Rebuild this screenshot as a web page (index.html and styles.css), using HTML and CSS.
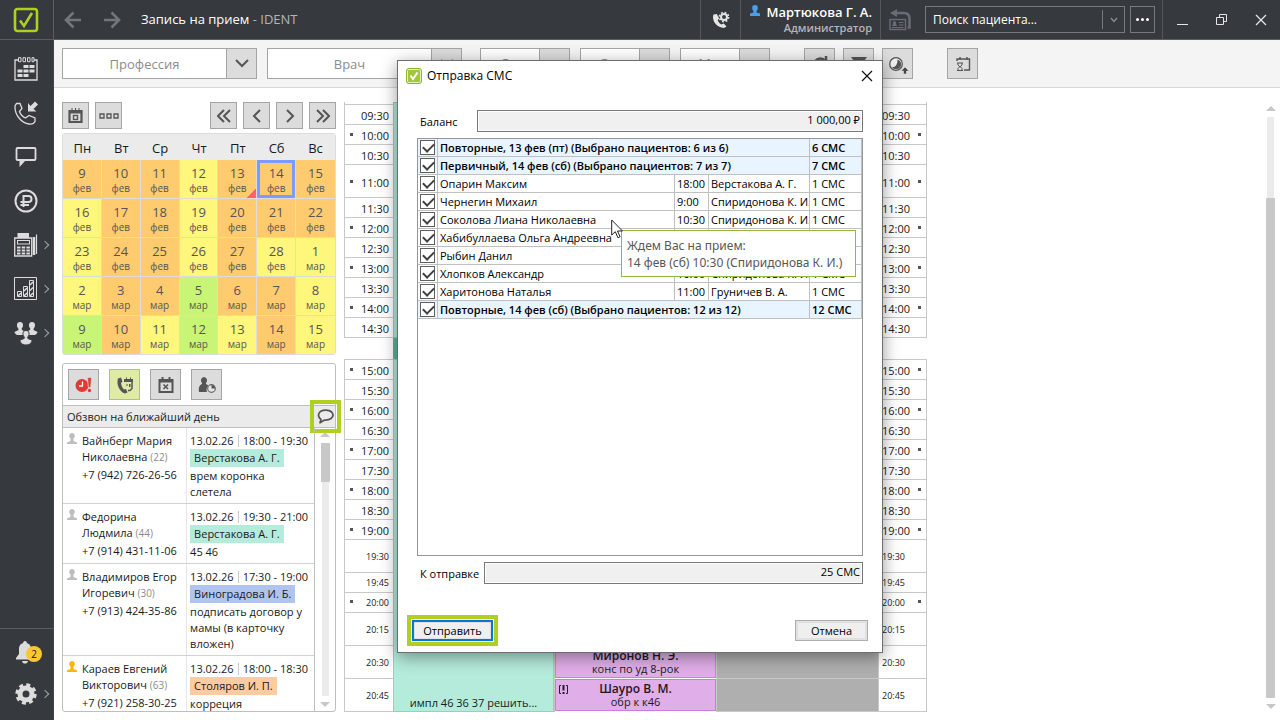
FILE: index.html
```html
<!DOCTYPE html>
<html lang="ru">
<head>
    <meta charset="UTF-8">
    <meta name="viewport" content="width=device-width, initial-scale=1.0">
    <title>Запись на прием - IDENT</title>
    <link rel="stylesheet" href="styles.css">
</head>
<body>
    <header class="topbar">
        <div class="logo">
            <svg width="26" height="26" viewBox="0 0 26 26" fill="none" stroke="#afd01f">
                <rect x="2" y="2" width="22" height="22" rx="2.5" stroke-width="2.6"/>
                <path d="M7 13.5l4 5.5 8-13" stroke-width="2.6"/>
            </svg>
        </div>
        <nav class="history">
            <button type="button" aria-label="Назад"><svg width="18" height="18" viewBox="0 0 18 18" fill="none" stroke="#73767c" stroke-width="2.6"><path d="M17 9H2M9.500 1.500L2 9l7.500 7.500"/></svg></button>
            <button type="button" aria-label="Вперед"><svg width="18" height="18" viewBox="0 0 18 18" fill="none" stroke="#73767c" stroke-width="2.6"><path d="M1 9h15M8.500 1.500L16 9l-7.500 7.500"/></svg></button>
        </nav>
        <h1 class="title">Запись на прием <span>- IDENT</span></h1>
        <button type="button" class="phone-settings" aria-label="Телефония">
            <svg width="18" height="18" viewBox="0 0 18 18">
                <path d="M1.500 3.500C-.5 9 4 16.500 12 17l2.500-1.500-2.800-3-2.200 1c-2-.8-3.500-2.800-3.800-4.500l1.500-1.500L4.800 3z" fill="#e6e6e6"/>
                <circle cx="12" cy="6" r="3" fill="none" stroke="#e6e6e6" stroke-width="2"/>
                <circle cx="12" cy="6" r="4.600" fill="none" stroke="#e6e6e6" stroke-width="1.600" stroke-dasharray="1.800 1.810"/>
            </svg>
        </button>
        <div class="user">
            <div class="user-name">
                <svg width="12" height="13" viewBox="0 0 12 13"><path d="M6 1a2.800 2.800 0 0 1 2.800 3c0 1.600-.8 2.500-1.300 3.200V8.500L11 9.500V12H1V9.500L4.500 8.500V7.200C4 6.500 3.200 5.600 3.200 4A2.800 2.800 0 0 1 6 1z" fill="#4a9fe8"/></svg>
                Мартюкова Г. А.
            </div>
            <div class="user-role">Администратор</div>
        </div>
        <div class="search">
            <button type="button" class="card-back" aria-label="Последний пациент">
                <svg width="22" height="22" viewBox="0 0 22 22" fill="none" stroke="#696c75">
                    <path d="M6 4h9c4 0 5.500 3 5.500 6v8.500h-2" stroke-width="2.500"/>
                    <path d="M8 0v8L1 4z" fill="#696c75" stroke="none"/>
                    <rect x="1" y="10.500" width="15.500" height="10" stroke-width="1.400"/>
                    <path d="M10 13.500h4.500M10 16h4.500M3 18.500h11.500" stroke-width="1.200"/>
                    <path d="M4 12.500h3v2.500l1 2H3l1-2z" fill="#696c75" stroke="none"/>
                </svg>
            </button>
            <label class="search-box">
                <input type="text" aria-label="Поиск пациента" placeholder="Поиск пациента...">
                <span class="search-arrow"><svg width="8" height="6" viewBox="0 0 8 6" fill="none" stroke="#8a8d92" stroke-width="1.300"><path d="M1 1l3 3.500L7 1"/></svg></span>
            </label>
            <button type="button" class="more" aria-label="Еще"><i></i><i></i><i></i></button>
        </div>
        <div class="window-buttons">
            <button type="button" aria-label="Свернуть"><svg width="12" height="12" viewBox="0 0 12 12" stroke="#e6e6e6"><path d="M0 10.500h11"/></svg></button>
            <button type="button" aria-label="Восстановить"><svg width="12" height="12" viewBox="0 0 12 12" fill="none" stroke="#e6e6e6"><path d="M.5 3.500h7v7h-7zM3.500 3.500v-3h7v7h-3"/></svg></button>
            <button type="button" aria-label="Закрыть"><svg width="12" height="12" viewBox="0 0 12 12" stroke="#e6e6e6" stroke-width="1.300"><path d="M1 1l10 10M11 1L1 11"/></svg></button>
        </div>
    </header>

    <div class="workspace">
        <aside class="sidebar">
            <a href="#" aria-label="Расписание">
                <svg width="24" height="24" viewBox="0 0 24 24" fill="none" stroke="#dcdcdc">
                    <path d="M4 3H1v20h22V3h-3" stroke-width="1.300"/>
                    <path d="M4.500.7h2.500v4H4.500zM9 .7h2.500v4H9zM13.500.7H16v4h-2.500zM18 .7h2v4h-2z"/>
                    <path d="M9.500 9.500h11M3.500 14h17M3.500 18.500h11" stroke-width="3" stroke-dasharray="5 1"/>
                </svg>
            </a>
            <a href="#" aria-label="Звонки">
                <svg width="24" height="24" viewBox="0 0 24 24" fill="none" stroke="#dcdcdc">
                    <path d="M2.500 2.500h3.500l2 5-2.500 3c1 3 3.500 5.500 6 6.500l3.500-2.500 6 2.500v3.500c-1 2-3 3-6 2.500C7.500 22 .5 14 1 5z" stroke-width="1.300"/>
                    <path d="M14 2v8.500h8.500L19.500 8 24 3.500 21 .5 16.500 5z" fill="#dcdcdc" stroke="none"/>
                </svg>
            </a>
            <a href="#" aria-label="Сообщения">
                <svg width="24" height="24" viewBox="0 0 24 24">
                    <rect x="2.500" y="3" width="19" height="12" rx="1" fill="none" stroke="#dcdcdc" stroke-width="1.800"/>
                    <path d="M5.500 15h6.500l-6.500 7z" fill="#dcdcdc"/>
                </svg>
            </a>
            <a href="#" aria-label="Финансы">
                <svg width="24" height="24" viewBox="0 0 24 24" fill="none" stroke="#dcdcdc" stroke-width="2">
                    <circle cx="12" cy="12" r="10.500"/>
                    <path d="M9.500 18V7h5a3 3 0 0 1 0 6h-8M6.500 16h8.500"/>
                </svg>
            </a>
            <a href="#" class="has-menu" aria-label="Касса">
                <svg width="24" height="24" viewBox="0 0 24 24" fill="none" stroke="#dcdcdc">
                    <path d="M3.500 0h11.500v5H3.500z" fill="#dcdcdc" stroke="none"/>
                    <path d="M.7 5h17v18H.7z" stroke-width="1.300"/>
                    <rect x="3.500" y="7.500" width="12" height="3.500"/>
                    <path d="M3 14.500h13M3 17.500h13M3 20.500h13" stroke-width="2" stroke-dasharray="3.500 1.200"/>
                    <path d="M20 4v18" stroke-width="2.500"/>
                    <path d="M22.500 1.500v19.500" stroke-width="1.200"/>
                </svg>
            </a>
            <a href="#" class="has-menu" aria-label="Отчеты">
                <svg width="24" height="24" viewBox="0 0 24 24" fill="none" stroke="#dcdcdc">
                    <path d="M.5.500h22v22H.5zM3.500 14.500h4v5h-4zM9.500 9.500h4v10h-4zM15.500 3.500h4v16h-4z"/>
                    <path d="M4 19l3-3M10 14l3-3M10 19l3-3M16 8l3-3M16 13.500l3-3M16 19l3-3" stroke-width="1.500"/>
                </svg>
            </a>
            <a href="#" class="has-menu" aria-label="Пациенты">
                <svg width="24" height="24" viewBox="0 0 24 24" fill="#dcdcdc">
                    <path d="M6 1c4 0 3.500 5 1.700 6.500L8 9l3 1.500v1L9 14H3C1.500 13 .5 12 .5 11L4.500 9l-.2-1.500C2.500 6 2 1 6 1z"/>
                    <path d="M18 1c-4 0-3.500 5-1.700 6.500L16 9l-3 1.500v1l2 2.500h6c1.500-1 2.500-2 2.500-3L19.500 9l.2-1.500C21.500 6 22 1 18 1z"/>
                    <path d="M12 9.500c4 0 3.500 5 1.700 6.500l.2 1.500L18 19c0 2-1.500 5-6 5s-6-3-6-5l4.100-1.500.2-1.500C8.500 14.500 8 9.500 12 9.500z" stroke="#36393e"/>
                </svg>
            </a>
            <div class="sidebar-bottom">
                <a href="#" aria-label="Уведомления">
                    <svg width="20" height="24" viewBox="0 0 20 24" fill="#dcdcdc">
                        <path d="M9 1c1.500 0 1.800 1 1.800 2C14 4 15 6 15 10v4l3 4v1.500H0V18l3-4v-4c0-4 1-6 4.200-7 0-1 .3-2 1.800-2zM6 21h6c-.5 2-1.500 2.500-3 2.500S6.500 23 6 21z"/>
                    </svg>
                    <span class="badge">2</span>
                </a>
                <a href="#" class="has-menu" aria-label="Настройки">
                    <svg width="22" height="22" viewBox="0 0 22 22" fill="none" stroke="#dcdcdc">
                        <circle cx="11" cy="11" r="6" stroke-width="5"/>
                        <circle cx="11" cy="11" r="9.200" stroke-width="3" stroke-dasharray="4 3.225"/>
                    </svg>
                </a>
            </div>
        </aside>

        <main class="main">
            <div class="filters">
                <label class="combo">
                    <select aria-label="Профессия"><option>Профессия</option></select>
                    <span class="combo-arrow"><svg width="14" height="9" viewBox="0 0 14 9"><path d="M1 1l6 6 6-6"/></svg></span>
                </label>
                <label class="combo">
                    <select aria-label="Врач"><option>Врач</option></select>
                    <span class="combo-arrow"><svg width="14" height="9" viewBox="0 0 14 9"><path d="M1 1l6 6 6-6"/></svg></span>
                </label>
                <div class="small-combos">
                    <label class="combo small">
                        <select aria-label="Статус"><option>С...</option></select>
                        <span class="combo-arrow"></span>
                    </label>
                    <label class="combo small">
                        <select aria-label="Запись"><option>З...</option></select>
                        <span class="combo-arrow"></span>
                    </label>
                    <label class="combo small">
                        <select aria-label="Место"><option>М...</option></select>
                        <span class="combo-arrow"></span>
                    </label>
                </div>
                <div class="filter-buttons">
                    <button type="button" aria-label="Обновить"><svg width="20" height="20" viewBox="0 0 20 20" fill="none" stroke="#555" stroke-width="2.500"><path d="M15 7a6 6 0 1 0 1 5M16 2v6h-6"/></svg></button>
                    <button type="button" aria-label="Фильтр"><svg width="20" height="20" viewBox="0 0 20 20" fill="#555"><path d="M2 3h16l-6 8v7l-4-3v-4z"/></svg></button>
                    <button type="button" aria-label="Время">
                        <svg width="22" height="22" viewBox="0 0 22 22">
                            <circle cx="9" cy="11" r="6.300" fill="#eee" stroke="#555" stroke-width="1.300"/>
                            <path d="M10.500 6.500a5 5 0 1 1-5.500 7.500c4 .5 5.500-3 5.500-7.500z" fill="#555"/>
                            <path d="M18 14l4 4h-2.500v3h-3v-3H14z" fill="#444" stroke="#ddd" stroke-width=".6"/>
                        </svg>
                    </button>
                </div>
                <button type="button" class="waiting" aria-label="Лист ожидания">
                    <svg width="16" height="16" viewBox="0 0 16 16" fill="none" stroke="#555">
                        <path d="M2 5V3h12.500v11H9M5 1v3M12 1v3" stroke-width="1.400"/>
                        <path d="M2 7h6M2 14.500h6M3 7v2l2 2 2-2V7M3 14.500v-2l2-2 2 2v2"/>
                    </svg>
                </button>
            </div>

            <div class="content">
                <div class="left">
                    <div class="date-nav">
                        <button type="button" aria-label="Сегодня"><svg width="15" height="16" viewBox="0 0 15 16" fill="none" stroke="#555"><path d="M1.500 3h12v11h-12z" stroke-width="2.200"/><path d="M1 4.500h13" stroke-width="2"/><path d="M4 0v3M7.500 0v3M11 0v3"/><rect x="5.500" y="7.500" width="4" height="4" stroke-width="1.400"/></svg></button>
                        <button type="button" aria-label="Период"><svg width="20" height="6" viewBox="0 0 20 6" fill="none" stroke="#555" stroke-width="1.300"><path d="M1 1h4v4H1zM8 1h4v4H8zM15 1h4v4h-4z"/></svg></button>
                        <button type="button" class="first-nav" aria-label="Месяц назад"><svg width="14" height="14" viewBox="0 0 14 14"><path d="M7 1L1 7l6 6M13 1L7 7l6 6"/></svg></button>
                        <button type="button" aria-label="Неделя назад"><svg width="14" height="14" viewBox="0 0 14 14"><path d="M10 1L4 7l6 6"/></svg></button>
                        <button type="button" aria-label="Неделя вперед"><svg width="14" height="14" viewBox="0 0 14 14"><path d="M4 1l6 6-6 6"/></svg></button>
                        <button type="button" aria-label="Месяц вперед"><svg width="14" height="14" viewBox="0 0 14 14"><path d="M1 1l6 6-6 6M7 1l6 6-6 6"/></svg></button>
                    </div>

                    <table class="calendar">
                        <thead>
                            <tr><th>Пн</th><th>Вт</th><th>Ср</th><th>Чт</th><th>Пт</th><th>Сб</th><th>Вс</th></tr>
                        </thead>
                        <tbody>
                            <tr>
                                <td class="busy">9<small>фев</small></td><td class="busy">10<small>фев</small></td><td class="busy">11<small>фев</small></td><td>12<small>фев</small></td><td class="busy today">13<small>фев</small></td><td class="busy selected">14<small>фев</small></td><td class="busy">15<small>фев</small></td>
                            </tr>
                            <tr>
                                <td>16<small>фев</small></td><td class="busy">17<small>фев</small></td><td class="busy">18<small>фев</small></td><td>19<small>фев</small></td><td class="busy">20<small>фев</small></td><td class="busy">21<small>фев</small></td><td class="busy">22<small>фев</small></td>
                            </tr>
                            <tr>
                                <td>23<small>фев</small></td><td class="busy">24<small>фев</small></td><td class="busy">25<small>фев</small></td><td>26<small>фев</small></td><td class="busy">27<small>фев</small></td><td>28<small>фев</small></td><td>1<small>мар</small></td>
                            </tr>
                            <tr>
                                <td>2<small>мар</small></td><td class="busy">3<small>мар</small></td><td class="busy">4<small>мар</small></td><td class="free">5<small>мар</small></td><td class="busy">6<small>мар</small></td><td class="busy">7<small>мар</small></td><td>8<small>мар</small></td>
                            </tr>
                            <tr>
                                <td class="free">9<small>мар</small></td><td class="busy">10<small>мар</small></td><td>11<small>мар</small></td><td class="free">12<small>мар</small></td><td>13<small>мар</small></td><td class="busy">14<small>мар</small></td><td>15<small>мар</small></td>
                            </tr>
                        </tbody>
                    </table>

                    <section class="tasks">
                        <div class="task-tabs">
                            <button type="button" aria-label="Просрочено"><svg width="18" height="18" viewBox="0 0 18 18"><circle cx="7" cy="9.500" r="6.500" fill="#e03a36"/><path d="M7.500 5.500v4.500H4" fill="none" stroke="#fff" stroke-width="1.300"/><path d="M12.500 1.500h4l-.8 10h-2.400z" fill="#e03a36" stroke="#dcdcdc" stroke-width=".7"/><circle cx="14.500" cy="14.500" r="1.700" fill="#e03a36"/></svg></button>
                            <button type="button" class="active" aria-label="Обзвон"><svg width="18" height="18" viewBox="0 0 18 18" fill="#555"><path d="M2 2.500l3-1 1.500 4L5 7c.3 3 1.500 5 3 6.500l2-.5 1.500 3.500L9 17.500C3.500 16 0 8 2 2.500z"/><path d="M8.500 4.500h7.500v8l-2 2h-2" fill="none" stroke="#555" stroke-width="1.500"/><path d="M8 3h9v3H8zM10 1.500h1v2h-1zM14 1.500h1v2h-1zM10 8.500h2v1h-2zM13 8h1.500v3H13z"/></svg></button>
                            <button type="button" aria-label="Отмены"><svg width="18" height="18" viewBox="0 0 18 18" fill="none" stroke="#555"><path d="M2.500 4h13v12h-13z" stroke-width="2"/><path d="M2 5h14" stroke-width="3"/><path d="M5.500 1v3M12.500 1v3" stroke-width="2"/><path d="M6.500 8.500l4.500 4.500M11 8.500L6.500 13" stroke-width="1.600"/></svg></button>
                            <button type="button" aria-label="Напоминания"><svg width="18" height="18" viewBox="0 0 18 18" fill="#555"><path d="M6 1a3.500 3.500 0 0 1 2 6v1l2.500 1.500A6 6 0 0 0 9 16H1c-.5-4 0-6.500 3-8V7A3.500 3.500 0 0 1 6 1z"/><circle cx="13.500" cy="12.500" r="3.800" fill="#e6e6e6" stroke="#666" stroke-width="1.200"/><path d="M13.500 12.500V9a3.500 3.500 0 0 1 3.500 3.500z"/></svg></button>
                        </div>
                        <div class="tasks-head">
                            <h2>Обзвон на ближайший день</h2>
                            <button type="button" aria-label="Отправить СМС"><svg width="17" height="15" viewBox="0 0 17 15" fill="none" stroke="#555" stroke-width="1.700"><path d="M4 10.500C-.5 7 1.500 1.200 8.500 1.200s9.500 5 5.500 8.300c-2 1.500-4 1.700-6.500 1.500L3 13.800z" stroke-linejoin="round"/></svg></button>
                        </div>
                        <div class="tasks-body">
                            <ul class="patients">
                                <li>
                                    <div class="person">
                                        <svg width="12" height="12" viewBox="0 0 12 12"><path d="M6 0a3 3 0 0 1 1.500 5.500V8L11 9.500V11H1V9.500L4.500 8V5.500A3 3 0 0 1 6 0z"/></svg>
                                        <div>Вайнберг Мария Николаевна <span>(22)</span><p>+7 (942) 726-26-56</p></div>
                                    </div>
                                    <div class="visit">
                                        <p class="time">13.02.26<i></i>18:00 - 19:30</p>
                                        <mark>Верстакова А. Г.</mark>
                                        <p>врем коронка слетела</p>
                                    </div>
                                </li>
                                <li>
                                    <div class="person">
                                        <svg width="12" height="12" viewBox="0 0 12 12"><path d="M6 0a3 3 0 0 1 1.500 5.500V8L11 9.500V11H1V9.500L4.500 8V5.500A3 3 0 0 1 6 0z"/></svg>
                                        <div>Федорина Людмила <span>(44)</span><p>+7 (914) 431-11-06</p></div>
                                    </div>
                                    <div class="visit">
                                        <p class="time">13.02.26<i></i>19:30 - 21:00</p>
                                        <mark>Верстакова А. Г.</mark>
                                        <p>45 46</p>
                                    </div>
                                </li>
                                <li>
                                    <div class="person">
                                        <svg width="12" height="12" viewBox="0 0 12 12"><path d="M6 0a3 3 0 0 1 1.500 5.500V8L11 9.500V11H1V9.500L4.500 8V5.500A3 3 0 0 1 6 0z"/></svg>
                                        <div>Владимиров Егор Игоревич <span>(30)</span><p>+7 (913) 424-35-86</p></div>
                                    </div>
                                    <div class="visit">
                                        <p class="time">13.02.26<i></i>17:30 - 19:00</p>
                                        <mark class="blue">Виноградова И. Б.</mark>
                                        <p>подписать договор у мамы (в карточку вложен)</p>
                                    </div>
                                </li>
                                <li>
                                    <div class="person vip">
                                        <svg width="12" height="12" viewBox="0 0 12 12"><path d="M6 0a3 3 0 0 1 1.500 5.500V8L11 9.500V11H1V9.500L4.500 8V5.500A3 3 0 0 1 6 0z"/></svg>
                                        <div>Караев Евгений Викторович <span>(63)</span><p>+7 (921) 258-30-25</p></div>
                                    </div>
                                    <div class="visit">
                                        <p class="time">13.02.26<i></i>18:00 - 18:30</p>
                                        <mark class="orange">Столяров И. П.</mark>
                                        <p>корреция</p>
                                    </div>
                                </li>
                            </ul>
                            <div class="scroll">
                                <span class="up"></span>
                                <div class="track"><div class="thumb"></div></div>
                                <span class="down"></span>
                            </div>
                        </div>
                    </section>
                </div>

                <div class="schedule">
                    <ol class="times">
                        <li class="cut"></li>
                        <li>09:30</li><li class="hour">10:00</li><li>10:30</li><li class="hour tall">11:00</li><li>11:30</li><li class="hour">12:00</li><li>12:30</li><li class="hour">13:00</li><li>13:30</li><li class="hour">14:00</li><li>14:30</li>
                        <li class="break"></li>
                        <li class="hour">15:00</li><li>15:30</li><li class="hour">16:00</li><li>16:30</li><li class="hour">17:00</li><li>17:30</li><li class="hour">18:00</li><li>18:30</li><li class="hour">19:00</li>
                        <li class="minor tall">19:30</li><li class="minor">19:45</li><li class="minor hour">20:00</li><li class="minor tall">20:15</li><li class="minor tall">20:30</li><li class="minor tall">20:45</li>
                    </ol>
                    <div class="doctor">
                        <div class="visit-card morning"></div>
                        <div class="lunch"></div>
                        <div class="visit-card evening">импл 46 36 37 решить...</div>
                    </div>
                    <div class="doctor">
                        <div class="off"></div>
                        <div class="visit-card purple"><b>Миронов Н. Э.</b>конс по уд 8-рок</div>
                        <div class="visit-card purple">
                            <svg width="9" height="9" viewBox="0 0 9 9" fill="none" stroke="#222"><path d="M2 .5H.5v8H2M7 .5h1.500v8H7"/><path d="M4.500 0v5.500M4.500 7v2" stroke-width="2"/></svg>
                            <b>Шауро В. М.</b>обр к к46
                        </div>
                    </div>
                    <div class="doctor">
                        <div class="off"></div>
                        <div class="off last"></div>
                    </div>
                    <ol class="times right">
                        <li class="cut"></li>
                        <li>09:30</li><li class="hour">10:00</li><li>10:30</li><li class="hour tall">11:00</li><li>11:30</li><li class="hour">12:00</li><li>12:30</li><li class="hour">13:00</li><li>13:30</li><li class="hour">14:00</li><li>14:30</li>
                        <li class="break"></li>
                        <li class="hour">15:00</li><li>15:30</li><li class="hour">16:00</li><li>16:30</li><li class="hour">17:00</li><li>17:30</li><li class="hour">18:00</li><li>18:30</li><li class="hour">19:00</li>
                        <li class="minor tall">19:30</li><li class="minor">19:45</li><li class="minor hour">20:00</li><li class="minor tall">20:15</li><li class="minor tall">20:30</li><li class="minor tall">20:45</li>
                    </ol>
                </div>

                <div class="scroll page-scroll">
                    <span class="up"></span>
                    <div class="track"><div class="thumb"></div></div>
                    <span class="down"></span>
                </div>
            </div>
        </main>
    </div>

    <!-- SMS dialog -->
    <div class="overlay">
        <section class="dialog" role="dialog" aria-labelledby="dialog-title">
            <div class="dialog-title">
                <svg width="16" height="16" viewBox="0 0 16 16"><rect x=".5" y=".5" width="15" height="15" rx="2.500" fill="#a3c63a" stroke="#8fb52e"/><rect x="1.500" y="1.500" width="13" height="13" rx="1.500" fill="none" stroke="#e4f0bd"/><path d="M4.500 7.500L7 11l4.500-6.500" fill="none" stroke="#fff" stroke-width="2"/></svg>
                <h2 id="dialog-title">Отправка СМС</h2>
                <button type="button" aria-label="Закрыть"><svg width="12" height="12" viewBox="0 0 12 12" stroke="#111" stroke-width="1.200"><path d="M1 1l10 10M11 1L1 11"/></svg></button>
            </div>
            <form class="dialog-body">
                <div class="field balance">
                    <label for="balance">Баланс</label>
                    <input id="balance" type="text" value="1 000,00 ₽" readonly>
                </div>
                <div class="sms-list">
                    <table>
                        <colgroup><col class="c-check"><col><col class="c-time"><col class="c-doctor"><col class="c-count"></colgroup>
                        <tbody>
                            <tr class="group"><td><input type="checkbox" aria-label="Повторные, 13 фев" checked></td><td colspan="3">Повторные, 13 фев (пт) (Выбрано пациентов: 6 из 6)</td><td>6 СМС</td></tr>
                            <tr class="group"><td><input type="checkbox" aria-label="Первичный, 14 фев" checked></td><td colspan="3">Первичный, 14 фев (сб) (Выбрано пациентов: 7 из 7)</td><td>7 СМС</td></tr>
                            <tr><td><input type="checkbox" aria-label="Опарин Максим" checked></td><td>Опарин Максим</td><td>18:00</td><td>Верстакова А. Г.</td><td>1 СМС</td></tr>
                            <tr><td><input type="checkbox" aria-label="Чернегин Михаил" checked></td><td>Чернегин Михаил</td><td>9:00</td><td>Спиридонова К. И.</td><td>1 СМС</td></tr>
                            <tr><td><input type="checkbox" aria-label="Соколова Лиана Николаевна" checked></td><td>Соколова Лиана Николаевна</td><td>10:30</td><td>Спиридонова К. И.</td><td>1 СМС</td></tr>
                            <tr><td><input type="checkbox" aria-label="Хабибуллаева Ольга Андреевна" checked></td><td>Хабибуллаева Ольга Андреевна</td><td></td><td></td><td></td></tr>
                            <tr><td><input type="checkbox" aria-label="Рыбин Данил" checked></td><td>Рыбин Данил</td><td></td><td></td><td></td></tr>
                            <tr><td><input type="checkbox" aria-label="Хлопков Александр" checked></td><td>Хлопков Александр</td><td>16:00</td><td>Спиридонова К. И.</td><td>1 СМС</td></tr>
                            <tr><td><input type="checkbox" aria-label="Харитонова Наталья" checked></td><td>Харитонова Наталья</td><td>11:00</td><td>Груничев В. А.</td><td>1 СМС</td></tr>
                            <tr class="group"><td><input type="checkbox" aria-label="Повторные, 14 фев" checked></td><td colspan="3">Повторные, 14 фев (сб) (Выбрано пациентов: 12 из 12)</td><td>12 СМС</td></tr>
                        </tbody>
                    </table>
                    <div class="tooltip" role="tooltip">Ждем Вас на прием:<br>14 фев (сб) 10:30 (Спиридонова К. И.)</div>
                    <svg class="cursor" width="13" height="20" viewBox="0 0 13 20"><path d="M.7 1v15l3.600-3.300 2.600 6 2.200-1-2.600-5.700h5z" fill="#fff" stroke="#222"/></svg>
                </div>
                <div class="field">
                    <label for="to-send">К отправке</label>
                    <input id="to-send" type="text" value="25 СМС" readonly>
                </div>
                <div class="dialog-buttons">
                    <button type="submit" class="send">Отправить</button>
                    <button type="button">Отмена</button>
                </div>
            </form>
        </section>
    </div>
</body>
</html>
```

FILE: styles.css
```css
* {
    box-sizing: border-box;
}
body {
    margin: 0;
    height: 100vh;
    display: flex;
    flex-direction: column;
    overflow: hidden;
    font-family: "Open Sans", "Noto Sans", sans-serif;
    font-size: 11px;
    color: #1a1a1a;
    background-color: #fff;
}
button, input, select {
    font-family: inherit;
    font-size: inherit;
    color: inherit;
}
button {
    padding: 0;
    display: flex;
    align-items: center;
    justify-content: center;
}
h1, h2, p, ul, ol {
    margin: 0;
    padding: 0;
    font-weight: normal;
    font-size: inherit;
    list-style: none;
}
svg {
    display: block;
    flex: none;
}

/* Top bar */
.topbar {
    flex: none;
    display: flex;
    height: 40px;
    background-color: #36393e;
    border-bottom: 1px solid #5c5e63;
    color: #fff;
}
.topbar button {
    background: none;
    border: none;
}
.logo {
    width: 54px;
    padding-right: 1px;
    display: flex;
    align-items: center;
    justify-content: center;
    border-right: 1px solid #5c5e63;
}
.history {
    display: flex;
    gap: 21px;
    padding: 0 20px 0 10px;
}
.title {
    flex: 1;
    line-height: 38px;
    font-size: 13px;
}
.title span {
    color: #b4b5b8;
}
.topbar .phone-settings {
    width: 41px;
    border: solid #55575c;
    border-width: 0 1px;
}
.user {
    width: 139px;
    padding: 4px 8px 0 0;
    text-align: right;
}
.user-name {
    display: flex;
    justify-content: flex-end;
    gap: 5px;
    font-size: 13px;
    line-height: 16px;
    font-weight: 600;
    white-space: nowrap;
}
.user-role {
    font-size: 11px;
    line-height: 16px;
    font-weight: 600;
    color: #b4b5b8;
}
.search {
    display: flex;
    align-items: center;
    gap: 5px;
    padding: 0 7px;
    border: solid #55575c;
    border-width: 0 1px;
}
.card-back {
    width: 24px;
    margin-right: 8px;
}
.search-box {
    display: flex;
    width: 200px;
    height: 27px;
    border: 1px solid #77797d;
}
.search-box input {
    flex: 1;
    min-width: 0;
    padding: 0 7px;
    border: none;
    background: none;
    font-size: 12px;
}
.search-box input::placeholder {
    color: #fff;
    opacity: 1;
}
.search-arrow {
    width: 22px;
    margin: 3px 0;
    display: flex;
    align-items: center;
    justify-content: center;
    border-left: 1px solid #77797d;
}
.topbar .more {
    width: 25px;
    height: 27px;
    gap: 2px;
    border: 1px solid #77797d;
}
.more i {
    width: 3px;
    height: 3px;
    border-radius: 50%;
    background-color: #fff;
}
.window-buttons {
    display: flex;
}
.window-buttons button {
    width: 39px;
}

/* Sidebar */
.workspace {
    flex: 1;
    min-height: 0;
    display: flex;
}
.sidebar {
    width: 54px;
    padding-top: 7px;
    display: flex;
    flex-direction: column;
    background-color: #36393e;
    border-right: 1px solid #44464b;
}
.sidebar a {
    position: relative;
    height: 44px;
    padding-right: 1px;
    display: flex;
    align-items: center;
    justify-content: center;
    text-decoration: none;
}
.has-menu::after {
    content: "";
    position: absolute;
    right: 5px;
    width: 5px;
    height: 5px;
    border: solid #a0a2a6;
    border-width: 1px 1px 0 0;
    transform: rotate(45deg);
}
.sidebar-bottom {
    margin-top: auto;
    padding: 2px 0 5px;
    border-top: 1px solid #5c5e63;
}
.sidebar-bottom a {
    height: 42px;
}
.badge {
    position: absolute;
    left: 26px;
    top: 15px;
    width: 16px;
    height: 16px;
    border-radius: 50%;
    background-color: #fdc82f;
    color: #222;
    font-size: 10px;
    line-height: 16px;
    text-align: center;
}

/* Filters */
.main {
    flex: 1;
    min-width: 0;
    display: flex;
    flex-direction: column;
}
.filters {
    display: flex;
    gap: 10px;
    padding: 8px;
    height: 48px;
    background-color: #f4f4f4;
    border-bottom: 1px solid #d8d8d8;
}
.combo {
    display: flex;
    width: 195px;
    border: 1px solid #a5a5a5;
    background-color: #fff;
}
.combo select {
    flex: 1;
    min-width: 0;
    appearance: none;
    border: none;
    background: none;
    font-size: 13px;
    color: #8c8c8c;
    text-align: center;
    text-align-last: center;
}
.combo-arrow {
    width: 30px;
    display: flex;
    align-items: center;
    justify-content: center;
    background-color: #dcdcdc;
    border-left: 1px solid #a5a5a5;
}
.combo-arrow path, .date-nav button:nth-child(n+3) path {
    fill: none;
    stroke: #555;
    stroke-width: 2;
}
.small-combos {
    display: flex;
    gap: 10px;
    margin-left: 8px;
}
.small {
    width: 90px;
}
.small select {
    font-size: 14px;
}
.filter-buttons {
    display: flex;
    gap: 8px;
    margin: 0 24px;
}
.filters button {
    width: 31px;
    background-color: #dcdcdc;
    border: 1px solid #a5a5a5;
}

/* Left column */
.content {
    flex: 1;
    min-height: 0;
    display: flex;
    gap: 8px;
    padding: 14px 4px 8px 8px;
}
.left {
    width: 274px;
    display: flex;
    flex-direction: column;
}
.date-nav {
    display: flex;
    gap: 6px;
    margin-bottom: 4px;
}
.date-nav button {
    width: 27px;
    height: 27px;
    background-color: #dcdcdc;
    border: 1px solid #a5a5a5;
}
.date-nav .first-nav {
    margin-left: auto;
}
.calendar {
    width: 100%;
    table-layout: fixed;
    border-collapse: separate;
    border-spacing: 0;
    border: 1px solid #dcdcdc;
    border-radius: 3px;
}
.calendar th {
    height: 26px;
    padding: 2px 0 0;
    background-color: #ebebeb;
    font-size: 13px;
    font-weight: normal;
}
.calendar td {
    position: relative;
    height: 39px;
    padding: 2px 0 0;
    border: solid #dcdcdc;
    border-width: 0 1px 1px 0;
    background-color: #fff67c;
    text-align: center;
    font-size: 13px;
    line-height: 16px;
    color: #555;
}
.calendar td:last-child {
    border-right: none;
}
.calendar tr:last-child td {
    height: 38px;
    border-bottom: none;
}
.calendar small {
    display: block;
    font-size: 10px;
    line-height: 14px;
}
.calendar .busy {
    background-color: #ffcb6e;
}
.calendar .free {
    background-color: #c9f577;
}
.calendar .selected {
    box-shadow: inset 0 0 0 3px #7d9bff;
}
.calendar .today::after {
    content: "";
    position: absolute;
    right: 0;
    bottom: 0;
    width: 10px;
    height: 10px;
    background: linear-gradient(135deg, transparent 50%, #ff6464 50%);
}

/* Call list */
.tasks {
    flex: 1;
    min-height: 0;
    margin-top: 8px;
    display: flex;
    flex-direction: column;
    border: 1px solid #bebebe;
    border-radius: 3px;
}
.task-tabs {
    display: flex;
    gap: 10px;
    padding: 5px;
}
.task-tabs button {
    width: 31px;
    height: 31px;
    background-color: #dcdcdc;
    border: 1px solid #a5a5a5;
}
.task-tabs .active {
    background-color: #dfeaa6;
    border-color: #b0d136;
}
.tasks-head {
    display: flex;
    align-items: center;
    justify-content: space-between;
    height: 23px;
    padding-left: 4px;
    background-color: #ebebeb;
    border: solid #bebebe;
    border-width: 1px 0;
}
.tasks-head button {
    width: 23px;
    height: 25px;
    margin-right: -2px;
    border: none;
    background: none;
    outline: 4px solid #afd01f;
}
.tasks-body {
    flex: 1;
    min-height: 0;
    display: flex;
}
.patients {
    flex: 1;
    overflow: hidden;
    border-right: 1px solid #bebebe;
    line-height: 16px;
}
.patients li {
    display: flex;
    border-bottom: 1px solid #d2d2d2;
}
.person {
    width: 127px;
    display: flex;
    gap: 4px;
    padding: 5px 4px 0 3px;
    border-right: 1px solid #e6e6e6;
}
.person svg {
    fill: #bebebe;
}
.person span {
    font-size: 10px;
    color: #8c8c8c;
}
.person p {
    margin-top: 2px;
    white-space: nowrap;
}
.vip svg {
    fill: #ffb400;
}
.visit {
    flex: 1;
    padding: 5px 6px 3px 3px;
}
.visit .time {
    white-space: nowrap;
}
.visit i {
    display: inline-block;
    width: 1px;
    height: 12px;
    margin: 0 4px;
    background-color: #c8c8c8;
    vertical-align: -2px;
}
.visit mark {
    display: block;
    width: fit-content;
    margin-bottom: 1px;
    padding: 0 4px;
    line-height: 18px;
    color: inherit;
    background-color: #b5ebdb;
    white-space: nowrap;
}
.visit .blue {
    background-color: #b0c4f0;
}
.visit .orange {
    background-color: #fccba2;
}
.scroll {
    width: 20px;
    display: flex;
    flex-direction: column;
    align-items: center;
    gap: 6px;
    padding: 4px 0;
}
.up, .down {
    border: 5px solid transparent;
}
.up {
    border-top: none;
    border-bottom-color: #c8c8c8;
}
.down {
    border-bottom: none;
    border-top-color: #c8c8c8;
}
.track {
    flex: 1;
    width: 7px;
    background-color: #ebebeb;
}
.thumb {
    width: 9px;
    height: 39px;
    margin-left: -1px;
    border-radius: 1px;
    background-color: #c8c8c8;
}

/* Schedule */
.schedule {
    display: flex;
    width: 583px;
    overflow: hidden;
}
.times {
    width: 49px;
    border-left: 1px solid #c8c8c8;
}
.times li {
    display: flex;
    align-items: center;
    justify-content: flex-end;
    height: 20px;
    padding: 2px 4px 0 5px;
    border-bottom: 1px solid #c8c8c8;
}
.times .cut {
    height: 3px;
    padding: 0;
}
.times .tall {
    height: 33px;
}
.times .break {
    height: 22px;
    margin-left: -1px;
    background-color: #fff;
}
.times .minor {
    padding-top: 0;
    font-size: 9px;
}
.times .hour::before {
    content: "";
    width: 3px;
    height: 3px;
    margin: 0 auto 2px 0;
    background-color: #555;
}
.right {
    width: 48px;
    border-left: none;
    border-right: 1px solid #c8c8c8;
}
.right li {
    flex-direction: row-reverse;
    padding: 2px 5px 0 3px;
}
.right .hour::before {
    margin: 0 0 2px auto;
}
.right .break {
    margin: 0 -1px 0 0;
}
.doctor {
    flex: 1;
    display: flex;
    flex-direction: column;
    border-right: 1px solid #c8c8c8;
}
.visit-card {
    position: relative;
    display: flex;
    flex-direction: column;
    align-items: center;
    justify-content: flex-end;
    border: 1px solid #8fd3be;
    background-color: #b5ebdb;
    line-height: 13px;
}
.visit-card b {
    font-size: 12px;
    line-height: 12px;
    font-weight: 600;
}
.visit-card svg {
    position: absolute;
    left: 3px;
    top: 5px;
}
.morning {
    height: 236px;
}
.lunch {
    height: 21px;
    background-color: #55b89b;
}
.evening {
    flex: 1;
    padding-bottom: 2px;
}
.off {
    flex: 1;
    background-color: #afafaf;
    border-bottom: 1px solid #c8c8c8;
}
.off.last {
    flex: none;
    height: 33px;
}
.purple {
    height: 32px;
    margin-bottom: 1px;
    padding-bottom: 2px;
    background-color: #e0aee8;
    border-color: #cc7ddb;
}
.page-scroll {
    width: 11px;
    margin-left: auto;
    padding: 4px 0 3px;
}
.page-scroll .track {
    display: flex;
    align-items: flex-end;
}
.page-scroll .thumb {
    flex: none;
    height: 86%;
}

/* Dialog */
.overlay {
    position: absolute;
    inset: 0;
    display: flex;
    justify-content: center;
    align-items: flex-start;
    padding-top: 60px;
}
.dialog {
    width: 486px;
    border: 1px solid #6e6e6e;
    background-color: #fff;
    box-shadow: 0 4px 16px rgba(0, 0, 0, 0.4);
    color: #000;
}
.dialog-title {
    display: flex;
    align-items: center;
    gap: 5px;
    height: 29px;
    padding: 0 9px 0 8px;
}
.dialog-title h2 {
    flex: 1;
    font-size: 12px;
}
.dialog-title button {
    border: none;
    background: none;
}
.dialog-body {
    padding: 20px 14px 11px 9px;
}
.field {
    display: flex;
    align-items: center;
    gap: 5px;
    margin: 0 5px 0 13px;
}
.balance {
    gap: 20px;
}
.field input {
    flex: 1;
    height: 22px;
    padding: 0 2px 3px;
    border: 1px solid #787878;
    background-color: #f0f0f0;
    box-shadow: inset 0 0 0 1px #fff;
    text-align: right;
}
.sms-list {
    position: relative;
    height: 418px;
    margin: 6px 5px 6px 10px;
    border: 1px solid #969696;
}
.sms-list table {
    width: 100%;
    table-layout: fixed;
    border-collapse: separate;
    border-spacing: 0;
}
.c-check {
    width: 20px;
}
.c-time {
    width: 34px;
}
.c-doctor {
    width: 101px;
}
.c-count {
    width: 52px;
}
.sms-list td {
    height: 18px;
    padding: 0 0 0 2px;
    border: solid #c0c0c0;
    border-width: 0 1px 1px 0;
    line-height: 17px;
    white-space: nowrap;
    overflow: hidden;
}
.group td {
    background-color: #e8f4ff;
    font-weight: 600;
}
.sms-list input {
    appearance: none;
    display: block;
    width: 15px;
    height: 15px;
    margin: 0;
    border: 1px solid #606060;
    background-color: #fff;
}
.sms-list input:checked::before {
    content: "";
    display: block;
    width: 9px;
    height: 5px;
    margin: 2px 0 0 2px;
    border: solid #404040;
    border-width: 0 0 2px 2px;
    transform: rotate(-45deg);
}
.tooltip {
    position: absolute;
    left: 203px;
    top: 91px;
    min-width: 235px;
    padding: 6px 5px 5px;
    border: 1px solid #8fbc3f;
    background-color: #fff;
    font-family: "Noto Sans", sans-serif;
    font-size: 12px;
    line-height: 17px;
    color: #575757;
    white-space: nowrap;
}
.cursor {
    position: absolute;
    left: 193px;
    top: 80px;
}
.dialog-buttons {
    display: flex;
    justify-content: space-between;
    margin-top: 36px;
    padding-left: 5px;
}
.dialog-buttons button {
    width: 73px;
    height: 21px;
    border: 1px solid #adadad;
    background-color: #efefef;
    box-shadow: inset 0 0 0 2px #e1e1e1;
}
.dialog-buttons .send {
    width: 81px;
    border: 2px solid #0078d7;
    box-shadow: inset 0 0 0 1px #e1e1e1, 0 0 0 1px #fff;
    outline: 4px solid #afd01f;
    outline-offset: 1px;
}
```
